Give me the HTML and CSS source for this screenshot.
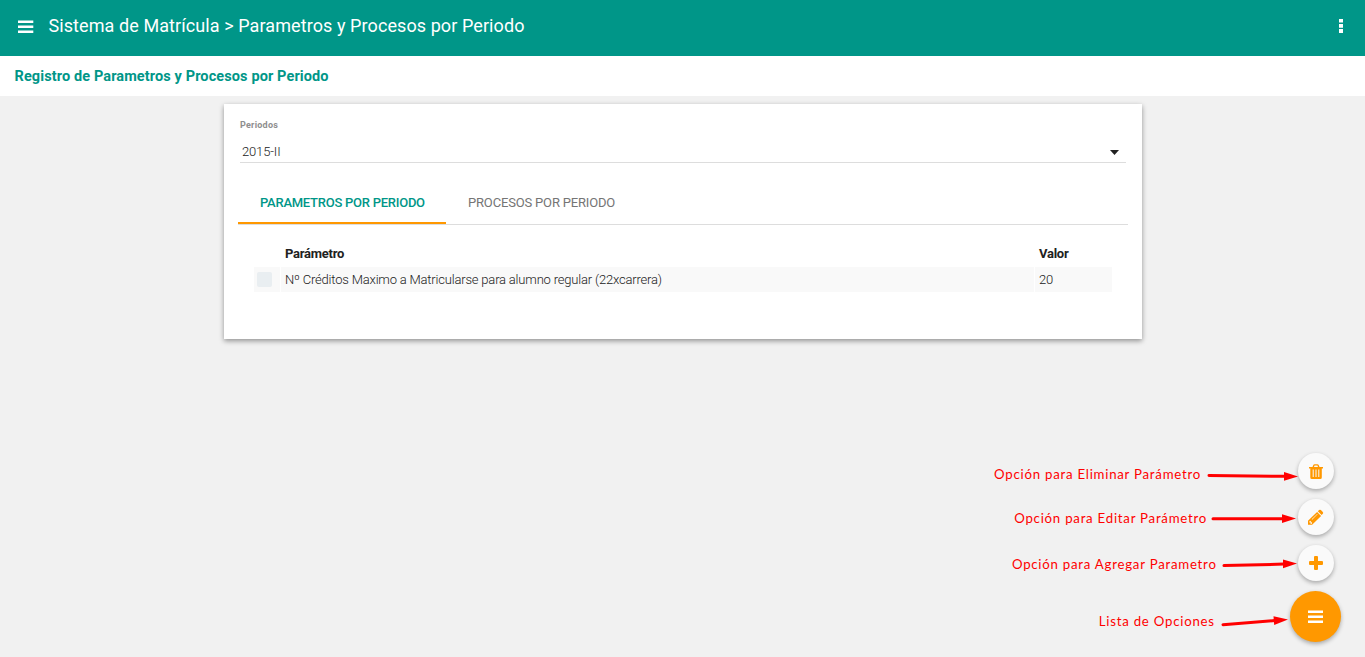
FILE: index.html
```html
<!DOCTYPE html>
<html lang="es">
<head>
<meta charset="utf-8">
<title>Sistema de Matrícula</title>
<link rel="stylesheet" href="styles.css">
</head>
<body>
<header class="topbar">
  <svg class="menu-icon" width="16" height="14" viewBox="0 0 16 14"><path fill="#fff" d="M0 .6h15.300v2.300H0zM0 5.600h15.300v2.300H0zM0 10.600h15.300v2.300H0z"/></svg>
  <h1 class="title"><span>Sistema de Matrícula &gt; Parametros y Procesos por Periodo</span></h1>
  <svg class="more-icon" width="4" height="14" viewBox="0 0 4 14"><path fill="#fff" d="M0 0h4v3.600H0zM0 5h4v3.800H0zM0 10h4v4H0z"/></svg>
</header>
<div class="subbar"><span>Registro de Parametros y Procesos por Periodo</span></div>
<main class="card">
  <div class="field">
    <div class="field-label"><span>Periodos</span></div>
    <div class="select"><span>2015-II</span><svg width="9" height="5" viewBox="0 0 9 5"><path fill="#212121" d="M0 0h9L4.500 5z"/></svg></div>
  </div>
  <nav class="tabs">
    <div class="tab tab-active"><span>PARAMETROS POR PERIODO</span></div>
    <div class="tab"><span>PROCESOS POR PERIODO</span></div>
  </nav>
  <div class="grid">
    <div class="head"></div>
    <div class="head"><span>Parámetro</span></div>
    <div class="head"><span>Valor</span></div>
    <div class="cell cell-check"><i class="check"></i></div>
    <div class="cell"><span>Nº Créditos Maximo a Matricularse para alumno regular (22xcarrera)</span></div>
    <div class="cell"><span>20</span></div>
  </div>
</main>
<div class="actions">
  <div class="action">
    <span class="note note-delete">Opción para Eliminar Parámetro</span>
    <svg class="arrow" width="97" height="36" viewBox="0 0 97 36"><path class="shaft" d="M8 22.500 84 23.300"/><path class="tip" d="M83 19 97 23.600 83 27.700z"/></svg>
    <div class="fab"><svg width="14" height="18" viewBox="0 0 14 18"><path fill="#ff9800" fill-rule="evenodd" d="M0 5h3.500L4.300 3Q4.700 2.200 5.500 2.200h3q.8 0 1.200.8l.8 2H14v1.500h-1.200v9q0 1.600-1.600 1.600H2.900q-1.600 0-1.600-1.600v-9H0zM5 5h4l-.6-1.400H5.600zM3.700 7.500v7.600h1V7.500zM6.500 7.500v7.600h1V7.500zM9.300 7.500v7.600h1V7.500z"/></svg></div>
  </div>
  <div class="action">
    <span class="note note-edit">Opción para Editar Parámetro</span>
    <svg class="arrow" width="91" height="36" viewBox="0 0 91 36"><path class="shaft" d="M6 19.700H76"/><path class="tip" d="M75 15.300 89 19.600 75 23.900z"/></svg>
    <div class="fab"><svg width="16" height="18" viewBox="0 0 16 18"><path fill="#ff9800" fill-rule="evenodd" d="M0 12.700 9.100 4l4 4-9 8.700H0zM1.400 13.500v1.100h1.200v1.300h.8l.8-.9-2-2.200zM9.200 5.900 3.700 11.300l.4.400 5.500-5.400zM9.800 3.300 11.100 2.100q.9-.8 1.800 0l1.900 1.900q.9.900 0 1.800l-1.200 1.300z"/></svg></div>
  </div>
  <div class="action">
    <span class="note note-add">Opción para Agregar Parametro</span>
    <svg class="arrow" width="81" height="36" viewBox="0 0 81 36"><path class="shaft" d="M7 20.600 67 19.100"/><path class="tip" d="M66 14.500 80 18.600 66 23.200z"/></svg>
    <div class="fab"><svg width="14" height="14" viewBox="0 0 14 14"><path fill="#ff9800" d="M6 0h2q1 0 1 1v4h4q1 0 1 1v2q0 1-1 1H9v4q0 1-1 1H6q-1 0-1-1V9H1Q0 9 0 8V6q0-1 1-1h4V1q0-1 1-1z"/></svg></div>
  </div>
  <div class="action action-main">
    <span class="note note-list">Lista de Opciones</span>
    <svg class="arrow" width="75" height="51" viewBox="0 0 75 51"><path class="shaft" d="M8 33.700 60 29.500"/><path class="tip" d="M58.500 25.300 73 28.400 59.200 34z"/></svg>
    <div class="fab fab-main"><svg width="15" height="15" viewBox="0 0 15 15"><path fill="#fff" d="M0 1.500h15v2.500H0zM0 6.500h15v2.500H0zM0 11.500h15v2.500H0z"/></svg></div>
  </div>
</div>
</body>
</html>
```
FILE: styles.css
```css
* { box-sizing: border-box; }
body { margin: 0; height: 657px; overflow: hidden; background: #f1f1f1; font-family: Roboto, sans-serif; font-size: 13px; color: #212121; }
svg { display: block; flex: none; }
span { white-space: nowrap; }
.topbar { height: 56px; background: #009688; color: #fff; display: flex; align-items: center; padding: 0 22px 4px 18px; }
.menu-icon { margin-top: 1px; }
.title { flex: 1; margin: 0 0 0 14.5px; font-size: 18px; font-weight: 400; line-height: 24px; letter-spacing: .085px; }
.more-icon { margin-top: 0; }
.subbar { height: 40px; background: #fff; color: #009688; font-size: 14.5px; font-weight: 700; line-height: 41px; padding: 0 0 0 14.5px; letter-spacing: .11px; }
.card { width: 918px; height: 235px; margin: 8px 0 0 224px; background: #fff; box-shadow: 0 2px 5px rgba(0,0,0,.4); padding: 14px; }
.field { margin: 0 2px; border-bottom: 1px solid #ddd; height: 45px; }
.field-label { font-size: 9px; font-weight: 700; color: #8e8e8e; line-height: 14px; letter-spacing: .25px; }
.select { display: flex; justify-content: space-between; align-items: center; padding: 9px 7px 0 2px; height: 31px; font-weight: 300; line-height: 20px; letter-spacing: -.15px; }
.tabs { display: flex; height: 62px; border-bottom: 1px solid #ddd; }
.tab { padding: 32px 22px 0; line-height: 16px; color: #757575; letter-spacing: -.17px; }
.tab-active { width: 208px; height: 61px; color: #009688; font-weight: 500; border-bottom: 2px solid #ff9800; letter-spacing: -.25px; }
.grid { display: grid; grid-template-columns: 26px 753px 77px; grid-template-rows: 25px 25px; gap: 1px; margin: 16px 0 0 16px; }
.head, .cell { display: flex; align-items: center; padding-left: 4px; }
.head { font-weight: 700; letter-spacing: -.25px; }
.cell { background: #f9f9f9; font-weight: 300; letter-spacing: -.19px; }
.cell-check { padding: 0 0 1px 3.400px; }
.check { width: 15px; height: 15px; border-radius: 2px; background: #e9eef1; }
.actions { position: absolute; right: 24px; top: 453px; display: flex; flex-direction: column; align-items: flex-end; gap: 10px; }
.action { display: flex; height: 36px; padding-right: 7px; }
.action-main { height: 51px; padding-right: 0; }
.fab { width: 36px; height: 36px; border-radius: 50%; background: #fafafa; display: flex; align-items: center; justify-content: center; box-shadow: 0 2px 4px rgba(0,0,0,.3); }
.fab-main { width: 51px; height: 51px; background: #ff9800; }
.note { font-family: Lato, sans-serif; font-size: 14px; line-height: 18px; letter-spacing: .8px; color: #f00; transform: scaleX(.945); transform-origin: right; }
.note-delete { padding-top: 12px; }
.note-edit { padding-top: 10px; }
.note-add { padding-top: 10px; }
.note-list { padding-top: 21px; }
.shaft { fill: none; stroke: #f00; stroke-width: 3; stroke-linecap: round; }
.tip { fill: #f00; }
```
